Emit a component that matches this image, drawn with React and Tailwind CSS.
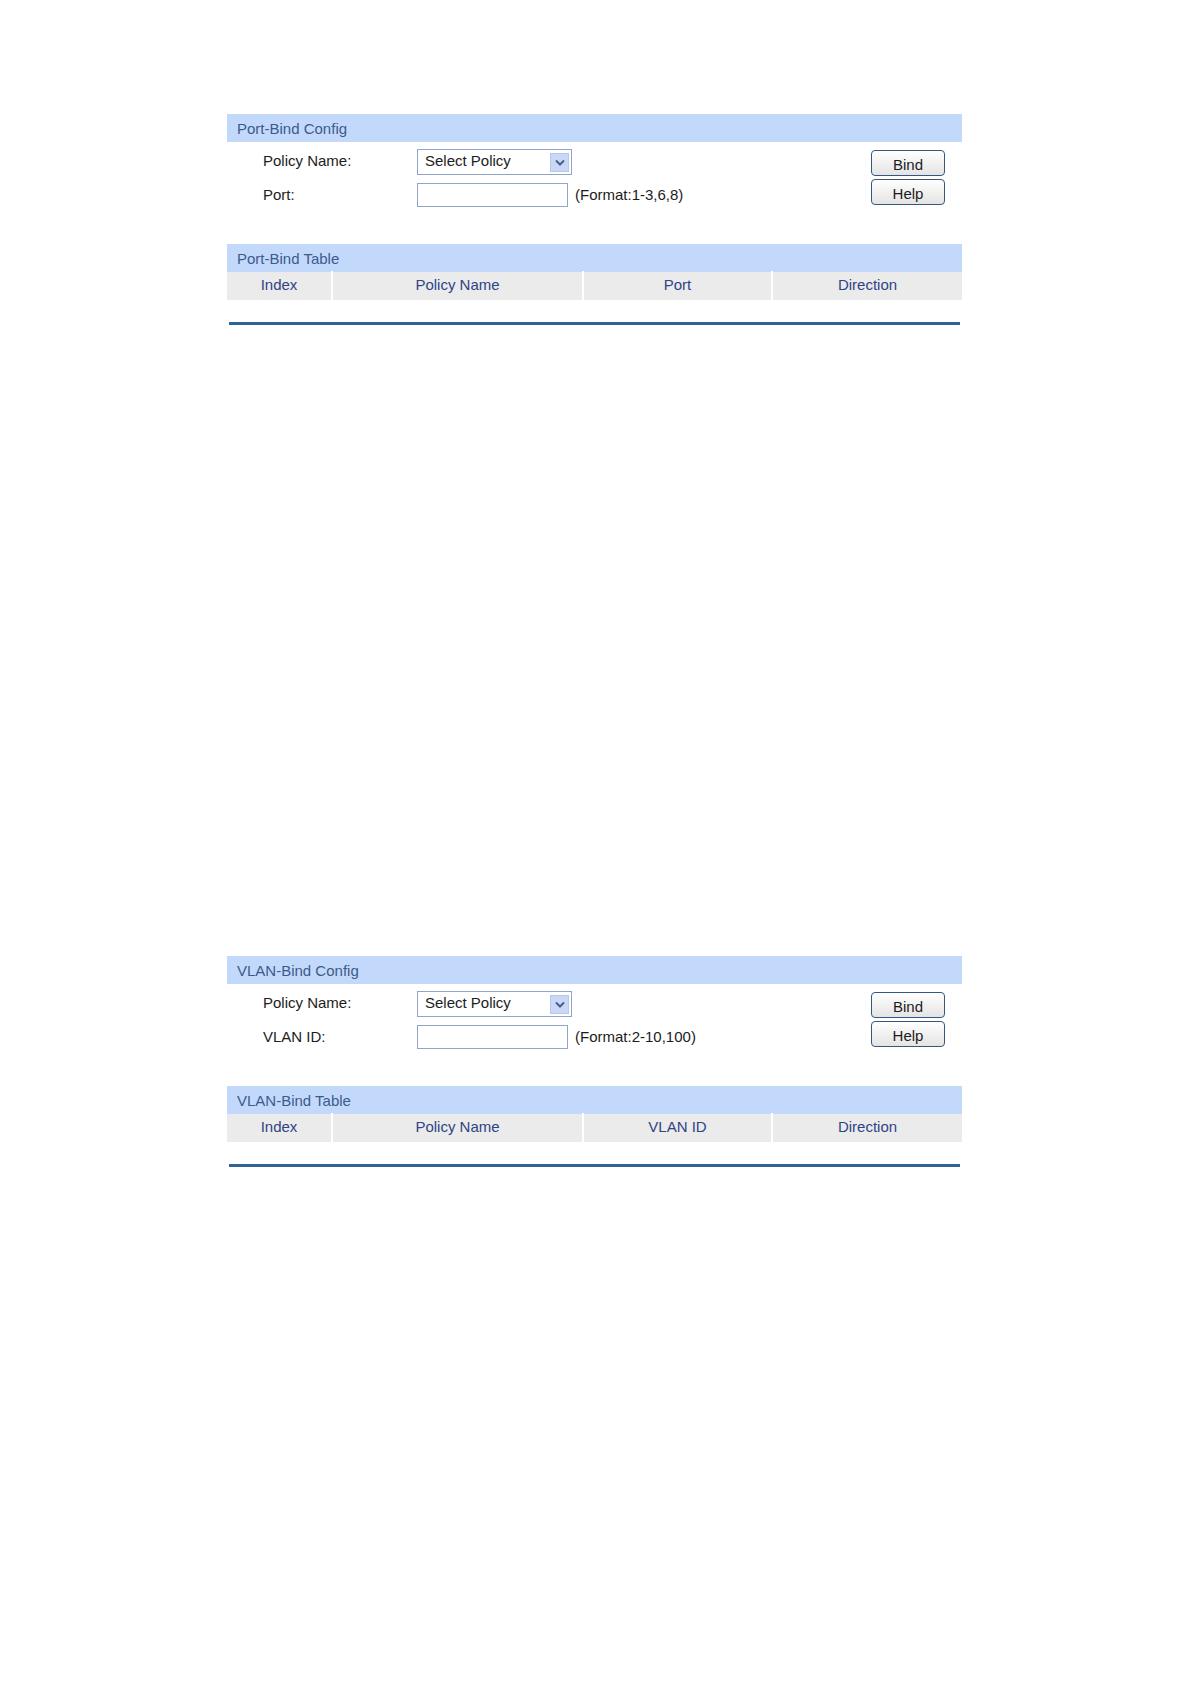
import React from 'react';

const font = { fontFamily: '"Liberation Sans", Arial, sans-serif' };

const SelectBox = () => (
  <div className="w-[155px] h-[26px] border border-[#8fa6c6] bg-white flex items-center justify-between pl-[7px] pr-[2px]">
    <span className="text-[15px] text-[#1c1c1c] -mt-[2px]">Select Policy</span>
    <div className="w-[19px] h-[19px] bg-[#c8d8f6] border border-[#b4c7ec] flex items-center justify-center">
      <svg width="10" height="7" viewBox="0 0 10 7">
        <path d="M1 1.5 L5 5.5 L9 1.5" fill="none" stroke="#4a5f8a" strokeWidth="2" />
      </svg>
    </div>
  </div>
);

const Button = ({ children }) => (
  <button className="w-[74px] h-[26px] rounded-[4px] border border-[#34587d] bg-gradient-to-b from-white to-[#e4e4e4] text-[15px] text-[#1c1c1c] flex items-center justify-center pt-[4px]">
    {children}
  </button>
);

const BindSection = ({ configTitle, tableTitle, fieldLabel, format, column }) => (
  <div className="w-[735px]">
    {/* Config */}
    <div className="h-[28px] bg-[#c3d9fb] flex items-center pl-[10px] pt-[2px] text-[15px] text-[#3d5a8c]">
      {configTitle}
    </div>
    <div className="h-[102px] flex justify-between">
      <div className="pl-[36px] pt-[7px] flex flex-col gap-[8px]">
        <div className="h-[26px] flex items-center">
          <span className="w-[154px] text-[15px] text-[#1c1c1c] -mt-[2px]">Policy Name:</span>
          <SelectBox />
        </div>
        <div className="h-[24px] flex items-center">
          <span className="w-[154px] text-[15px] text-[#1c1c1c]">{fieldLabel}</span>
          <div className="w-[151px] h-[24px] border border-[#8fa6c6] bg-white" />
          <span className="ml-[7px] text-[15px] text-[#1c1c1c]">{format}</span>
        </div>
      </div>
      <div className="pt-[8px] pr-[17px] flex flex-col gap-[3px]">
        <Button>Bind</Button>
        <Button>Help</Button>
      </div>
    </div>

    {/* Table */}
    <div className="h-[28px] bg-[#c3d9fb] flex items-center pl-[10px] pt-[2px] text-[15px] text-[#3d5a8c]">
      {tableTitle}
    </div>
    <div className="h-[28px] flex bg-[#ebebeb] text-[15px] text-[#2e4486]">
      {[
        { label: 'Index', w: 'w-[104px]' },
        { label: 'Policy Name', w: 'w-[251px]' },
        { label: column, w: 'w-[189px]' },
        { label: 'Direction', w: 'flex-1' },
      ].map((c, i) => (
        <div
          key={c.label}
          className={`${c.w} flex items-center justify-center -mt-[1px] ${i > 0 ? 'border-l-2 border-white' : ''}`}
        >
          {c.label}
        </div>
      ))}
    </div>
    <div className="mt-[22px] mx-[2px] h-[3px] bg-[#2f6396]" />
  </div>
);

export default function App() {
  return (
    <div className="w-[1191px] min-h-[1684px] bg-white pt-[114px] pl-[227px]" style={font}>
      <BindSection
        configTitle="Port-Bind Config"
        tableTitle="Port-Bind Table"
        fieldLabel="Port:"
        format="(Format:1-3,6,8)"
        column="Port"
      />
      <div className="h-[631px]" />
      <BindSection
        configTitle="VLAN-Bind Config"
        tableTitle="VLAN-Bind Table"
        fieldLabel="VLAN ID:"
        format="(Format:2-10,100)"
        column="VLAN ID"
      />
    </div>
  );
}
